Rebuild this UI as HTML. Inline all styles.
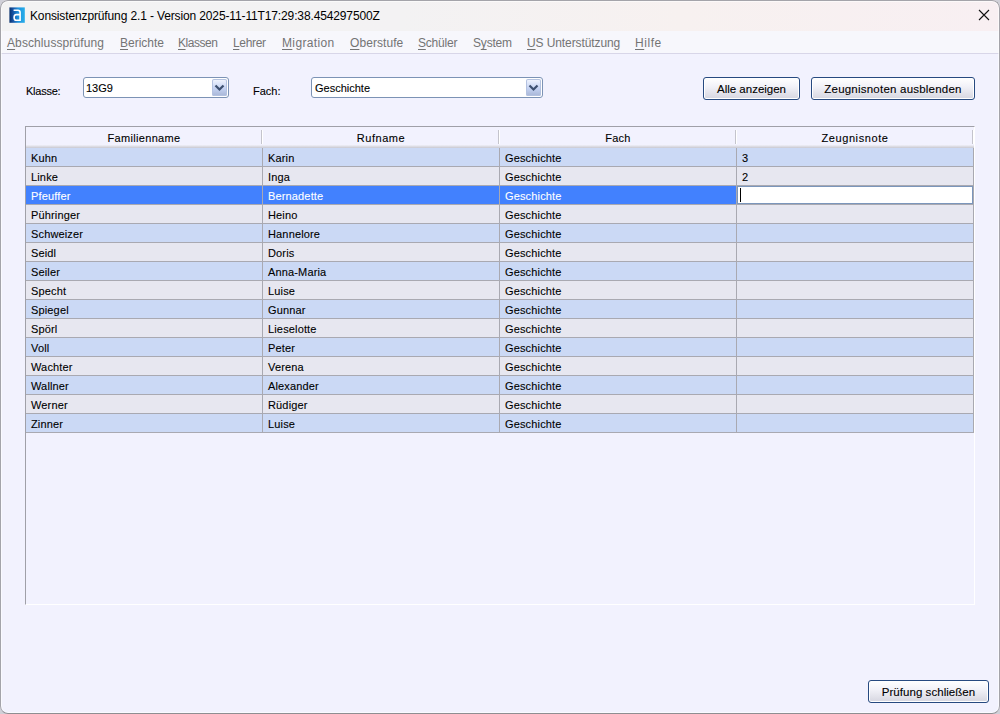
<!DOCTYPE html>
<html><head><meta charset="utf-8">
<style>
html,body{margin:0;padding:0;}
body{width:1000px;height:714px;overflow:hidden;position:relative;background:#d0d0d8;font-family:"Liberation Sans",sans-serif;}
.abs{position:absolute;}
#win{position:absolute;left:0;top:0;width:1000px;height:714px;border-radius:8px;overflow:hidden;background:#f2f2fe;}
#frame{position:absolute;left:0;top:0;width:1000px;height:714px;box-sizing:border-box;border:1px solid #a4a4aa;border-bottom-color:#8e8e92;border-radius:8px;box-shadow:inset 0 0 0 1px rgba(255,255,255,0.6);pointer-events:none;}
#title{position:absolute;left:0;top:0;width:1000px;height:31px;background:linear-gradient(90deg,#f3f3f3 0%,#f3f2f3 40%,#f7f1f0 68%,#f8eff2 100%);}
#menu{position:absolute;left:0;top:31px;width:1000px;height:22px;background:#f7f7fc;border-bottom:1px solid #d8d6e8;}
.t{position:absolute;white-space:nowrap;line-height:14px;}
.cell,.lbl,.btn span{-webkit-text-stroke:0.1px currentColor;}
.menu{font-size:12px;color:#747474;top:5px;}
.u{text-decoration:underline;text-underline-offset:2px;}
.lbl{font-size:11px;color:#000;}
.combo{position:absolute;border:1px solid #7c93b5;border-radius:3px;background:#fff;box-sizing:border-box;}
.cbtn{position:absolute;border-radius:2px;background:linear-gradient(#f4f7ff,#c4d2f2 55%,#a8b6d6);box-shadow:inset 0 0 0 1px #b4c2e0;}
.btn{position:absolute;border:1px solid #274a80;border-radius:3px;box-sizing:border-box;background:linear-gradient(#ffffff,#f2f2f8 40%,#d6d6e0);box-shadow:inset 0 0 0 1px #fff;}
.btn span{position:absolute;left:0;right:0;text-align:center;font-size:11.5px;color:#000;white-space:nowrap;}
#table{position:absolute;left:25px;top:126px;width:948px;height:477px;border-left:1px solid #a0a0a8;border-top:1px solid #a0a0a8;border-right:1px solid #fff;border-bottom:1px solid #fff;background:#f2f2fe;}
.hdr{position:absolute;top:0;height:21px;}
.hsep{position:absolute;top:3px;width:1px;height:14px;background:#c4c4cc;box-shadow:1px 0 0 #fff;}
.hline{position:absolute;left:0;top:18px;width:948px;height:3px;background:linear-gradient(#f0f0f8,#dcdce4 50%,#c8c8d0);}
.row{position:absolute;left:0;width:948px;height:18px;border-bottom:1px solid #a9a9b1;}
.odd{background:#cbd9f5;}
.even{background:#e7e7f0;}
.sel{background:#4281fe;color:#fff;}
.vl{position:absolute;top:0;width:1px;height:19px;background:#a9a9b1;}
.cell{position:absolute;top:3px;font-size:11px;line-height:14px;white-space:nowrap;color:#000;letter-spacing:0.15px;}
.sel .cell{color:#fff;}
.editor{position:absolute;left:711px;top:0;width:236px;height:18px;border:1px solid #7b96bb;background:#fff;box-sizing:border-box;}
.caret{position:absolute;left:2px;top:1px;width:1px;height:14px;background:#000;}
</style></head><body>
<div id="win">
  <div id="title">
    <svg class="abs" style="left:9px;top:7px" width="16" height="16" viewBox="0 0 16 16">
      <defs><linearGradient id="ig" x1="0" y1="0" x2="1" y2="0"><stop offset="0" stop-color="#08306c"/><stop offset="0.22" stop-color="#1650a0"/><stop offset="0.55" stop-color="#1e90dc"/><stop offset="1" stop-color="#26aeea"/></linearGradient></defs>
      <rect x="0.4" y="0.4" width="15.4" height="15.4" fill="url(#ig)"/>
      <path d="M4.6 3.3 L8.9 3.3 Q11.1 3.3 11.1 5.6 L11.1 13.9 M11.1 7.6 L7.3 7.6 Q5.1 7.6 5.1 10.4 Q5.1 13.2 7.3 13.2 L11.1 13.2" fill="none" stroke="#fff" stroke-width="1.6"/>
    </svg>
    <div class="t" style="left:30px;top:9px;font-size:12px;color:#000;letter-spacing:-0.13px">Konsistenzprüfung 2.1 - Version 2025-11-11T17:29:38.454297500Z</div>
    <svg class="abs" style="left:978px;top:9px" width="12" height="12" viewBox="0 0 12 12"><path d="M1 1 L11 11 M11 1 L1 11" stroke="#111" stroke-width="1.1"/></svg>
  </div>
  <div id="menu">
    <div class="t menu" style="left:7px;letter-spacing:0.1px"><span class="u">A</span>bschlussprüfung</div>
    <div class="t menu" style="left:120px"><span class="u">B</span>erichte</div>
    <div class="t menu" style="left:178px;letter-spacing:-0.45px"><span class="u">K</span>lassen</div>
    <div class="t menu" style="left:233px;letter-spacing:-0.32px"><span class="u">L</span>ehrer</div>
    <div class="t menu" style="left:282px;letter-spacing:0.36px"><span class="u">M</span>igration</div>
    <div class="t menu" style="left:350px;letter-spacing:0.07px"><span class="u">O</span>berstufe</div>
    <div class="t menu" style="left:418px;letter-spacing:-0.22px"><span class="u">S</span>chüler</div>
    <div class="t menu" style="left:473px;letter-spacing:-0.2px">S<span class="u">y</span>stem</div>
    <div class="t menu" style="left:527px;letter-spacing:-0.1px"><span class="u">U</span>S Unterstützung</div>
    <div class="t menu" style="left:635px;letter-spacing:0.55px"><span class="u">H</span>ilfe</div>
  </div>

  <div class="t lbl" style="left:26px;top:84px;letter-spacing:-0.25px">Klasse:</div>
  <div class="combo" style="left:83px;top:77px;width:146px;height:21px">
    <div class="t lbl" style="left:2px;top:3px">13G9</div>
    <div class="cbtn" style="left:128px;top:1px;width:15px;height:17px">
      <svg class="abs" style="left:2px;top:5px" width="11" height="8" viewBox="0 0 11 8"><path d="M1.5 1.5 L5.5 5.5 L9.5 1.5" fill="none" stroke="#3d5070" stroke-width="2.2"/></svg>
    </div>
  </div>
  <div class="t lbl" style="left:253px;top:84px">Fach:</div>
  <div class="combo" style="left:311px;top:77px;width:232px;height:21px">
    <div class="t lbl" style="left:3px;top:3px">Geschichte</div>
    <div class="cbtn" style="left:214px;top:1px;width:15px;height:17px">
      <svg class="abs" style="left:2px;top:5px" width="11" height="8" viewBox="0 0 11 8"><path d="M1.5 1.5 L5.5 5.5 L9.5 1.5" fill="none" stroke="#3d5070" stroke-width="2.2"/></svg>
    </div>
  </div>

  <div class="btn" style="left:703px;top:77px;width:97px;height:23px"><span style="top:5px">Alle anzeigen</span></div>
  <div class="btn" style="left:811px;top:77px;width:164px;height:23px"><span style="top:5px;letter-spacing:0.22px">Zeugnisnoten ausblenden</span></div>

  <div id="table">
    <div class="hdr" style="left:0;width:947px">
      <div class="cell" style="left:0;width:236px;text-align:center;top:4px;letter-spacing:0.33px">Familienname</div>
      <div class="cell" style="left:237px;width:236px;text-align:center;top:4px;letter-spacing:0.55px">Rufname</div>
      <div class="cell" style="left:474px;width:236px;text-align:center;top:4px;letter-spacing:0.25px">Fach</div>
      <div class="cell" style="left:711px;width:236px;text-align:center;top:4px;letter-spacing:0.6px">Zeugnisnote</div>
      <div class="hsep" style="left:235px"></div>
      <div class="hsep" style="left:472px"></div>
      <div class="hsep" style="left:709px"></div>
      <div class="hsep" style="left:946px"></div>
      <div class="hline"></div>
    </div>
    <!--ROWS-->
<div class="row odd" style="top:21px"><div class="cell" style="left:5px">Kuhn</div><div class="cell" style="left:242px">Karin</div><div class="cell" style="left:479px">Geschichte</div><div class="cell" style="left:716px">3</div><div class="vl" style="left:236px"></div><div class="vl" style="left:473px"></div><div class="vl" style="left:710px"></div><div class="vl" style="left:947px"></div></div>
<div class="row even" style="top:40px"><div class="cell" style="left:5px">Linke</div><div class="cell" style="left:242px">Inga</div><div class="cell" style="left:479px">Geschichte</div><div class="cell" style="left:716px">2</div><div class="vl" style="left:236px"></div><div class="vl" style="left:473px"></div><div class="vl" style="left:710px"></div><div class="vl" style="left:947px"></div></div>
<div class="row sel" style="top:59px"><div class="cell" style="left:5px">Pfeuffer</div><div class="cell" style="left:242px">Bernadette</div><div class="cell" style="left:479px">Geschichte</div><div class="editor"><div class="caret"></div></div><div class="vl" style="left:236px"></div><div class="vl" style="left:473px"></div><div class="vl" style="left:710px"></div><div class="vl" style="left:947px"></div></div>
<div class="row even" style="top:78px"><div class="cell" style="left:5px">Pühringer</div><div class="cell" style="left:242px">Heino</div><div class="cell" style="left:479px">Geschichte</div><div class="cell" style="left:716px"></div><div class="vl" style="left:236px"></div><div class="vl" style="left:473px"></div><div class="vl" style="left:710px"></div><div class="vl" style="left:947px"></div></div>
<div class="row odd" style="top:97px"><div class="cell" style="left:5px">Schweizer</div><div class="cell" style="left:242px">Hannelore</div><div class="cell" style="left:479px">Geschichte</div><div class="cell" style="left:716px"></div><div class="vl" style="left:236px"></div><div class="vl" style="left:473px"></div><div class="vl" style="left:710px"></div><div class="vl" style="left:947px"></div></div>
<div class="row even" style="top:116px"><div class="cell" style="left:5px">Seidl</div><div class="cell" style="left:242px">Doris</div><div class="cell" style="left:479px">Geschichte</div><div class="cell" style="left:716px"></div><div class="vl" style="left:236px"></div><div class="vl" style="left:473px"></div><div class="vl" style="left:710px"></div><div class="vl" style="left:947px"></div></div>
<div class="row odd" style="top:135px"><div class="cell" style="left:5px">Seiler</div><div class="cell" style="left:242px">Anna-Maria</div><div class="cell" style="left:479px">Geschichte</div><div class="cell" style="left:716px"></div><div class="vl" style="left:236px"></div><div class="vl" style="left:473px"></div><div class="vl" style="left:710px"></div><div class="vl" style="left:947px"></div></div>
<div class="row even" style="top:154px"><div class="cell" style="left:5px">Specht</div><div class="cell" style="left:242px">Luise</div><div class="cell" style="left:479px">Geschichte</div><div class="cell" style="left:716px"></div><div class="vl" style="left:236px"></div><div class="vl" style="left:473px"></div><div class="vl" style="left:710px"></div><div class="vl" style="left:947px"></div></div>
<div class="row odd" style="top:173px"><div class="cell" style="left:5px">Spiegel</div><div class="cell" style="left:242px">Gunnar</div><div class="cell" style="left:479px">Geschichte</div><div class="cell" style="left:716px"></div><div class="vl" style="left:236px"></div><div class="vl" style="left:473px"></div><div class="vl" style="left:710px"></div><div class="vl" style="left:947px"></div></div>
<div class="row even" style="top:192px"><div class="cell" style="left:5px">Spörl</div><div class="cell" style="left:242px">Lieselotte</div><div class="cell" style="left:479px">Geschichte</div><div class="cell" style="left:716px"></div><div class="vl" style="left:236px"></div><div class="vl" style="left:473px"></div><div class="vl" style="left:710px"></div><div class="vl" style="left:947px"></div></div>
<div class="row odd" style="top:211px"><div class="cell" style="left:5px">Voll</div><div class="cell" style="left:242px">Peter</div><div class="cell" style="left:479px">Geschichte</div><div class="cell" style="left:716px"></div><div class="vl" style="left:236px"></div><div class="vl" style="left:473px"></div><div class="vl" style="left:710px"></div><div class="vl" style="left:947px"></div></div>
<div class="row even" style="top:230px"><div class="cell" style="left:5px">Wachter</div><div class="cell" style="left:242px">Verena</div><div class="cell" style="left:479px">Geschichte</div><div class="cell" style="left:716px"></div><div class="vl" style="left:236px"></div><div class="vl" style="left:473px"></div><div class="vl" style="left:710px"></div><div class="vl" style="left:947px"></div></div>
<div class="row odd" style="top:249px"><div class="cell" style="left:5px">Wallner</div><div class="cell" style="left:242px">Alexander</div><div class="cell" style="left:479px">Geschichte</div><div class="cell" style="left:716px"></div><div class="vl" style="left:236px"></div><div class="vl" style="left:473px"></div><div class="vl" style="left:710px"></div><div class="vl" style="left:947px"></div></div>
<div class="row even" style="top:268px"><div class="cell" style="left:5px">Werner</div><div class="cell" style="left:242px">Rüdiger</div><div class="cell" style="left:479px">Geschichte</div><div class="cell" style="left:716px"></div><div class="vl" style="left:236px"></div><div class="vl" style="left:473px"></div><div class="vl" style="left:710px"></div><div class="vl" style="left:947px"></div></div>
<div class="row odd" style="top:287px"><div class="cell" style="left:5px">Zinner</div><div class="cell" style="left:242px">Luise</div><div class="cell" style="left:479px">Geschichte</div><div class="cell" style="left:716px"></div><div class="vl" style="left:236px"></div><div class="vl" style="left:473px"></div><div class="vl" style="left:710px"></div><div class="vl" style="left:947px"></div></div>
<!--/ROWS-->
  </div>

  <div class="btn" style="left:868px;top:680px;width:121px;height:23px"><span style="top:5px;letter-spacing:0.05px">Prüfung schließen</span></div>
</div>
<div id="frame"></div>
</body></html>
